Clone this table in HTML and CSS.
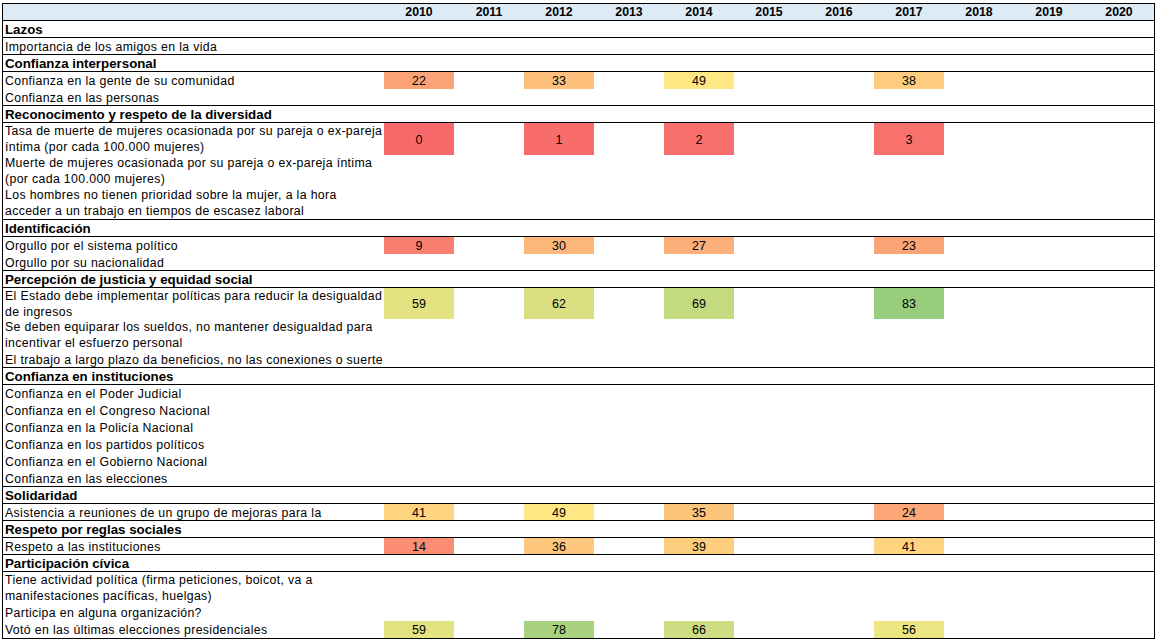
FILE: index.html
```html
<!DOCTYPE html>
<html lang="es">
<head>
<meta charset="utf-8">
<title>Indicadores</title>
<link rel="stylesheet" href="styles.css">
</head>
<body>
<div class="sheet">
  <div class="row head">
    <div class="lbl"></div>
    <div class="yr">2010</div><div class="yr">2011</div><div class="yr">2012</div><div class="yr">2013</div><div class="yr">2014</div><div class="yr">2015</div><div class="yr">2016</div><div class="yr">2017</div><div class="yr">2018</div><div class="yr">2019</div><div class="yr">2020</div>
  </div>

  <div class="row sec"><div class="lbl">Lazos</div></div>
  <div class="row last"><div class="lbl">Importancia de los amigos en la vida</div></div>

  <div class="row sec"><div class="lbl">Confianza interpersonal</div></div>
  <div class="row">
    <div class="lbl">Confianza en la gente de su comunidad</div>
    <div class="v" style="background:#FBA276">22</div><div></div>
    <div class="v" style="background:#FDBF7C">33</div><div></div>
    <div class="v" style="background:#FFE884">49</div><div></div><div></div>
    <div class="v" style="background:#FDCC7E">38</div>
  </div>
  <div class="row last"><div class="lbl">Confianza en las personas</div></div>

  <div class="row sec"><div class="lbl">Reconocimento y respeto de la diversidad</div></div>
  <div class="row h32">
    <div class="lbl">Tasa de muerte de mujeres ocasionada por su pareja o ex-pareja<br>íntima (por cada 100.000 mujeres)</div>
    <div class="v" style="background:#F8696B">0</div><div></div>
    <div class="v" style="background:#F86C6C">1</div><div></div>
    <div class="v" style="background:#F86E6C">2</div><div></div><div></div>
    <div class="v" style="background:#F8716D">3</div>
  </div>
  <div class="row h32"><div class="lbl">Muerte de mujeres ocasionada por su pareja o ex-pareja íntima<br>(por cada 100.000 mujeres)</div></div>
  <div class="row h33 last"><div class="lbl">Los hombres no tienen prioridad sobre la mujer, a la hora<br>acceder a un trabajo en tiempos de escasez laboral</div></div>

  <div class="row sec"><div class="lbl">Identificación</div></div>
  <div class="row">
    <div class="lbl">Orgullo por el sistema político</div>
    <div class="v" style="background:#F9806F">9</div><div></div>
    <div class="v" style="background:#FCB77A">30</div><div></div>
    <div class="v" style="background:#FCAF79">27</div><div></div><div></div>
    <div class="v" style="background:#FBA577">23</div>
  </div>
  <div class="row last"><div class="lbl">Orgullo por su nacionalidad</div></div>

  <div class="row sec"><div class="lbl">Percepción de justicia y equidad social</div></div>
  <div class="row h31">
    <div class="lbl">El Estado debe implementar políticas para reducir la desigualdad<br>de ingresos</div>
    <div class="v" style="background:#E3E382">59</div><div></div>
    <div class="v" style="background:#DAE082">62</div><div></div>
    <div class="v" style="background:#C4DA81">69</div><div></div><div></div>
    <div class="v" style="background:#98CD7E">83</div>
  </div>
  <div class="row h32"><div class="lbl">Se deben equiparar los sueldos, no mantener desigualdad para<br>incentivar el esfuerzo personal</div></div>
  <div class="row last"><div class="lbl">El trabajo a largo plazo da beneficios, no las conexiones o suerte</div></div>

  <div class="row sec"><div class="lbl">Confianza en instituciones</div></div>
  <div class="row"><div class="lbl">Confianza en el Poder Judicial</div></div>
  <div class="row"><div class="lbl">Confianza en el Congreso Nacional</div></div>
  <div class="row"><div class="lbl">Confianza en la Policía Nacional</div></div>
  <div class="row"><div class="lbl">Confianza en los partidos políticos</div></div>
  <div class="row"><div class="lbl">Confianza en el Gobierno Nacional</div></div>
  <div class="row last"><div class="lbl">Confianza en las elecciones</div></div>

  <div class="row sec"><div class="lbl">Solidaridad</div></div>
  <div class="row last">
    <div class="lbl">Asistencia a reuniones de un grupo de mejoras para la</div>
    <div class="v" style="background:#FED480">41</div><div></div>
    <div class="v" style="background:#FFE884">49</div><div></div>
    <div class="v" style="background:#FDC47C">35</div><div></div><div></div>
    <div class="v" style="background:#FBA777">24</div>
  </div>

  <div class="row sec"><div class="lbl">Respeto por reglas sociales</div></div>
  <div class="row last">
    <div class="lbl">Respeto a las instituciones</div>
    <div class="v" style="background:#FA8D72">14</div><div></div>
    <div class="v" style="background:#FDC77D">36</div><div></div>
    <div class="v" style="background:#FDCE7E">39</div><div></div><div></div>
    <div class="v" style="background:#FED480">41</div>
  </div>

  <div class="row sec"><div class="lbl">Participación cívica</div></div>
  <div class="row h32"><div class="lbl">Tiene actividad política (firma peticiones, boicot, va a<br>manifestaciones pacíficas, huelgas)</div></div>
  <div class="row"><div class="lbl">Participa en alguna organización?</div></div>
  <div class="row">
    <div class="lbl">Votó en las últimas elecciones presidenciales</div>
    <div class="v" style="background:#E3E382">59</div><div></div>
    <div class="v" style="background:#A8D27F">78</div><div></div>
    <div class="v" style="background:#CDDD81">66</div><div></div><div></div>
    <div class="v" style="background:#ECE683">56</div>
  </div>
</div>
</body>
</html>
```

FILE: styles.css
```css
html, body {
  margin: 0;
  padding: 0;
  background: #ffffff;
}

body {
  padding: 3px 0 0 2px;
  font-family: "Liberation Sans", Arial, sans-serif;
  color: #000000;
}

.sheet {
  width: 1151px;
  border: 1px solid #000000;
}

.row {
  display: grid;
  grid-template-columns: 381px repeat(11, 70px);
  height: 17px;
  box-sizing: border-box;
}

.row.h31 { height: 31px; }
.row.h32 { height: 32px; }
.row.h33 { height: 33px; }

.row.last,
.row.sec,
.row.head {
  border-bottom: 1px solid #000000;
}

.lbl {
  padding-left: 2px;
  padding-top: 1px;
  font-size: 12.3px;
  letter-spacing: 0.35px;
  line-height: 16px;
  white-space: nowrap;
  overflow: hidden;
}

.h31 .lbl,
.h32 .lbl,
.h33 .lbl {
  padding-top: 0;
  line-height: 16px;
}

.sec .lbl {
  padding-top: 0;
  font-size: 13.3px;
  font-weight: bold;
  letter-spacing: 0;
  line-height: 17px;
}

.head {
  background: #DDEBF7;
}

.yr {
  font-size: 12.3px;
  font-weight: bold;
  text-align: center;
  line-height: 16px;
}

.v {
  display: flex;
  align-items: center;
  justify-content: center;
  padding-top: 1px;
  font-size: 12.5px;
}
```
